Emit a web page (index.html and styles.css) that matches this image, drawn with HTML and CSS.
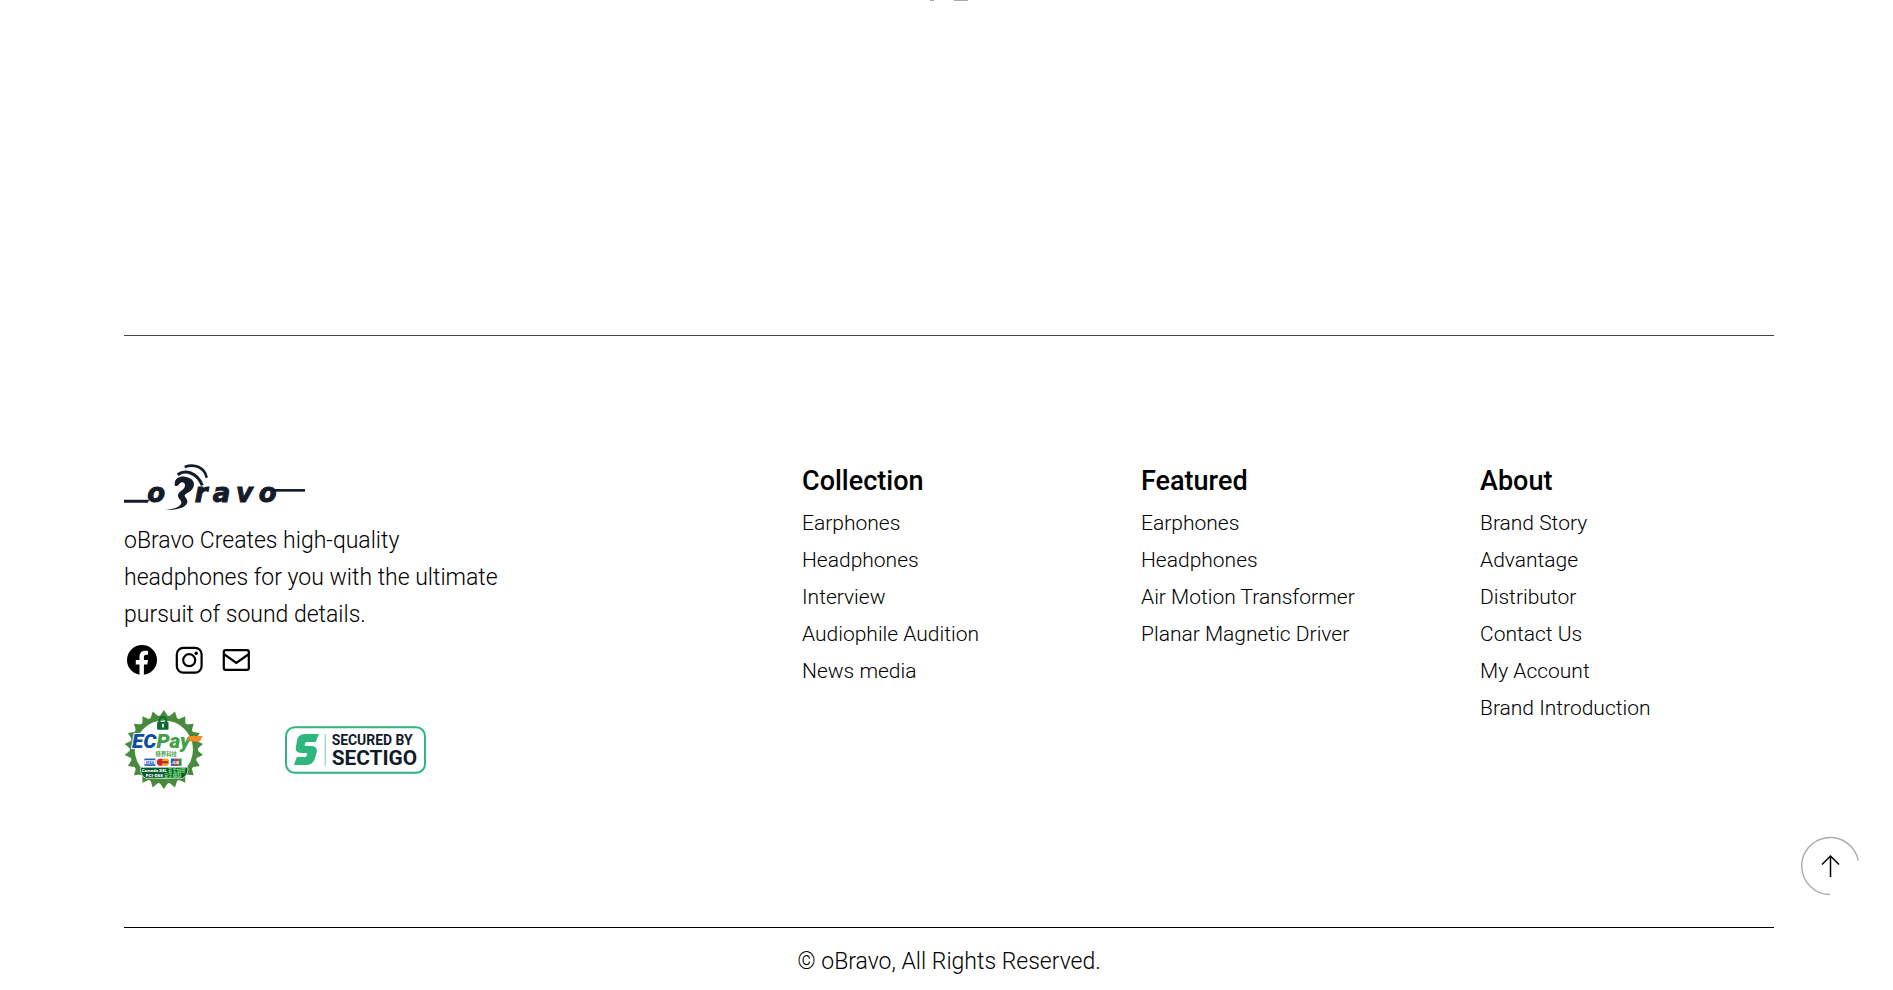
FILE: index.html
```html
<!DOCTYPE html>
<html lang="en">
<head>
<meta charset="utf-8">
<title>oBravo</title>
<link rel="stylesheet" href="styles.css">
</head>
<body>
<main class="content">
  <div class="edge" aria-hidden="true"><span class="edge-dot"></span><span class="edge-bar"></span></div>
</main>
<footer class="footer">
  <div class="columns">
    <section class="brand">
      <a class="logo" href="#">
        <svg viewBox="42 39 543 150" role="img" aria-label="oBravo">
          <g fill="#141b29">
            <path d="M42 149H118L113 158H42Z"/>
            <path d="M490 117H585V125H490Z"/>
            <path d="M195 108C190 88 207 78 224 80C248 83 259 99 247 117C241 126 228 129 224 136C223 143 236 148 231 160C225 175 198 181 165 179C194 177 213 169 214 158C215 151 204 147 204 136C205 125 220 121 224 111C228 101 219 94 212 98C206 101 208 108 195 108Z"/>
          </g>
          <g fill="none" stroke="#141b29">
            <path d="M203 74C225 58 260 66 277 106" stroke-width="9"/>
            <path d="M224 51C253 40 284 52 290 83" stroke-width="8"/>
          </g>
          <text class="logo-text" x="112 254 308 378 446" y="157">oravo</text>
        </svg>
      </a>
      <p class="tagline">oBravo Creates high-quality headphones for you with the ultimate pursuit of sound details.</p>
      <div class="social">
        <a href="#" aria-label="Facebook"><svg viewBox="0 0 36 36"><circle cx="18" cy="18" r="15"/><path fill="#fff" d="M15.5 33V22.5H11.8V18h3.7v-3.3c0-3.9 2.3-6 5.7-6 1.3 0 2.8.2 2.8.2v3.8h-1.7c-1.9 0-2.4 1.1-2.4 2.3v3h4.1l-.7 4.5h-3.4V33Z"/></svg></a>
        <a href="#" aria-label="Instagram"><svg viewBox="0 0 36 36"><g fill="none" stroke="#000" stroke-width="2.2"><rect x="5.8" y="5.8" width="24.8" height="24.8" rx="6.5"/><circle cx="18.200" cy="18.200" r="6"/></g><circle cx="25.200" cy="11.200" r="1.7"/></svg></a>
        <a href="#" aria-label="Email"><svg viewBox="0 0 36 36"><g fill="none" stroke="#000" stroke-width="2.2"><rect x="5.8" y="8.2" width="25" height="19.6" rx="1.8"/><path d="M6.500 12.5L18.300 21l12-8.500"/></g></svg></a>
      </div>
      <div class="badges">
        <svg class="ecpay" viewBox="30 24 248 248" role="img" aria-label="ECPay security seal">
          <defs><path id="tooth" d="M149 30L165 54H133Z"/></defs>
          <g fill="#498a3e">
            <circle cx="149" cy="148" r="102"/>
            <use href="#tooth"/><use href="#tooth" transform="rotate(16.36 149 148)"/><use href="#tooth" transform="rotate(32.73 149 148)"/><use href="#tooth" transform="rotate(49.09 149 148)"/><use href="#tooth" transform="rotate(65.45 149 148)"/><use href="#tooth" transform="rotate(81.82 149 148)"/><use href="#tooth" transform="rotate(98.18 149 148)"/><use href="#tooth" transform="rotate(114.55 149 148)"/><use href="#tooth" transform="rotate(130.91 149 148)"/><use href="#tooth" transform="rotate(147.27 149 148)"/><use href="#tooth" transform="rotate(163.64 149 148)"/><use href="#tooth" transform="rotate(180 149 148)"/><use href="#tooth" transform="rotate(196.36 149 148)"/><use href="#tooth" transform="rotate(212.73 149 148)"/><use href="#tooth" transform="rotate(229.09 149 148)"/><use href="#tooth" transform="rotate(245.45 149 148)"/><use href="#tooth" transform="rotate(261.82 149 148)"/><use href="#tooth" transform="rotate(278.18 149 148)"/><use href="#tooth" transform="rotate(294.55 149 148)"/><use href="#tooth" transform="rotate(310.91 149 148)"/><use href="#tooth" transform="rotate(327.27 149 148)"/><use href="#tooth" transform="rotate(343.64 149 148)"/>
          </g>
          <circle cx="149" cy="148" r="87" fill="#fff"/>
          <rect x="129" y="65" width="34" height="24" rx="3" fill="#0b6b32"/>
          <path d="M136 68V61a10 10 0 0 1 20 0v7" fill="none" stroke="#0b6b32" stroke-width="6"/>
          <path d="M144 71h5v11h-5z" fill="#fff"/>
          <text class="ecpay-name" x="54" y="145"><tspan fill="#0e4da0">EC</tspan><tspan fill="#43a047">Pay</tspan></text>
          <path d="M222 108h43l-8 16h-34z" fill="#f28c28"/>
          <text class="ecpay-cjk" x="124" y="166" fill="#43a047">綠界科技</text>
          <path d="M91 175h33v22H91z" fill="#2860b8"/><path d="M91 180h33v12H91z" fill="#fff"/>
          <text class="ecpay-card" x="94" y="191" fill="#2860b8">VISA</text>
          <circle cx="139" cy="186" r="11" fill="#e3262e"/><circle cx="154" cy="186" r="11" fill="#f6a01b"/><path d="M132 183h30v6h-30z" fill="#a52734"/>
          <path d="M170 175h12v22h-12z" fill="#1765b5"/><path d="M182 175h10v22h-10z" fill="#d32f3b"/><path d="M192 175h10v22h-10z" fill="#299443"/><text class="ecpay-card" x="172" y="191" fill="#fff">JCB</text>
          <path d="M80 201H220q5 18-14 33H94q-19-15-14-33Z" fill="#075c2d" stroke="#fff" stroke-width="2"/>
          <g class="ecpay-small" fill="#fff"><text x="83" y="215">Comodo SSL <tspan fill="#6bd16b">安全加密</tspan></text><text x="95" y="230">PCI-DSS <tspan fill="#6bd16b">安全機制</tspan></text></g>
        </svg>
        <svg class="sectigo" viewBox="0 0 142 48" role="img" aria-label="Secured by Sectigo">
          <rect x="1" y="1" width="140" height="46" rx="9" fill="#fff" stroke="#2db67d" stroke-width="2"/>
          <path d="M34 8L31 16H22Q20 16 20 18V20H26Q33 20 32 26L30 33Q28 39 21 39H9L12 31H20Q22 31 22 29V27H16Q10 27 11 21L12 15Q13 8 20 8Z" fill="#2db67d"/>
          <path d="M40.500 8V40" stroke="#72cca8" stroke-width="1"/>
          <g fill="#101c2c" class="sectigo-text"><text x="47" y="19" font-size="14">SECURED BY</text><text x="47" y="39" font-size="21">SECTIGO</text></g>
        </svg>
      </div>
    </section>
    <nav class="links" aria-labelledby="h-collection">
      <h2 id="h-collection">Collection</h2>
      <ul><li><a href="#">Earphones</a></li><li><a href="#">Headphones</a></li><li><a href="#">Interview</a></li><li><a href="#">Audiophile Audition</a></li><li><a href="#">News media</a></li></ul>
    </nav>
    <nav class="links" aria-labelledby="h-featured">
      <h2 id="h-featured">Featured</h2>
      <ul><li><a href="#">Earphones</a></li><li><a href="#">Headphones</a></li><li><a href="#">Air Motion Transformer</a></li><li><a href="#">Planar Magnetic Driver</a></li></ul>
    </nav>
    <nav class="links" aria-labelledby="h-about">
      <h2 id="h-about">About</h2>
      <ul><li><a href="#">Brand Story</a></li><li><a href="#">Advantage</a></li><li><a href="#">Distributor</a></li><li><a href="#">Contact Us</a></li><li><a href="#">My Account</a></li><li><a href="#">Brand Introduction</a></li></ul>
    </nav>
  </div>
  <p class="copyright">© oBravo, All Rights Reserved.</p>
</footer>
<button class="to-top" type="button" aria-label="Back to top">
  <svg viewBox="0 0 60 60" fill="none"><path d="M30 58.500A28.500 28.500 0 1 1 58.200 24.500" stroke="#aaa" stroke-width="1.400"/><path d="M30.500 41V20M22 28.500L30.500 20L39 28.500" stroke="#000" stroke-width="1.500"/></svg>
</button>
</body>
</html>
```
FILE: styles.css
```css
* { box-sizing: border-box; }
body {
  margin: 0;
  background: #fff;
  color: #000;
  font-family: Roboto, "Noto Sans CJK TC", sans-serif;
  font-weight: 300;
}
a { color: inherit; text-decoration: none; }
svg { display: block; }
h2, p, ul { margin: 0; padding: 0; }
ul { list-style: none; }
.content { height: 335px; }
.edge { display: flex; justify-content: center; gap: 20px; padding-left: 4px; }
.edge span { height: 1px; background: #aaa; }
.edge-dot { width: 4px; }
.edge-bar { width: 14px; }
.footer { padding: 0 119px 0 124px; }
.columns {
  display: grid;
  grid-template-columns: repeat(5, 1fr);
  column-gap: 45px;
  min-height: 593px;
  padding-top: 127px;
  border-top: 1px solid #444;
  border-bottom: 1px solid #000;
}
.brand { grid-column: span 2; }
.logo svg { width: 181px; height: 50px; }
.logo-text {
  font: italic bold 78px "DejaVu Sans", sans-serif;
  fill: #141b29;
  stroke: #141b29;
  stroke-width: 3px;
}
.tagline { max-width: 385px; padding-top: 9px; font-size: 23px; line-height: 37px; }
.social { display: flex; gap: 11px; padding-top: 9px; }
.social svg { width: 36px; height: 36px; }
.badges { display: flex; align-items: center; gap: 78px; padding-top: 30px; }
.ecpay { width: 83px; height: 83px; }
.ecpay-name {
  font: italic 900 62px Roboto, sans-serif;
  stroke: #fff;
  stroke-width: 6px;
  paint-order: stroke;
}
.ecpay-cjk { font: 700 16px "Noto Sans CJK TC", sans-serif; }
.ecpay-card { font: italic 900 12px Roboto, sans-serif; }
.ecpay-small { font: 900 13px Roboto, "Noto Sans CJK TC", sans-serif; }
.sectigo { width: 141px; height: 48px; }
.sectigo-text { font-family: Roboto, sans-serif; font-weight: 700; }
.links h2 { font-size: 27px; font-weight: 500; line-height: 37px; }
.links ul { padding-top: 5px; }
.links li { font-size: 21px; line-height: 37px; }
.copyright { padding-top: 15px; font-size: 23px; line-height: 37px; text-align: center; }
.to-top {
  position: fixed;
  right: 33px;
  bottom: 94px;
  width: 60px;
  height: 60px;
  padding: 0;
  border: 0;
  background: none;
}
```
